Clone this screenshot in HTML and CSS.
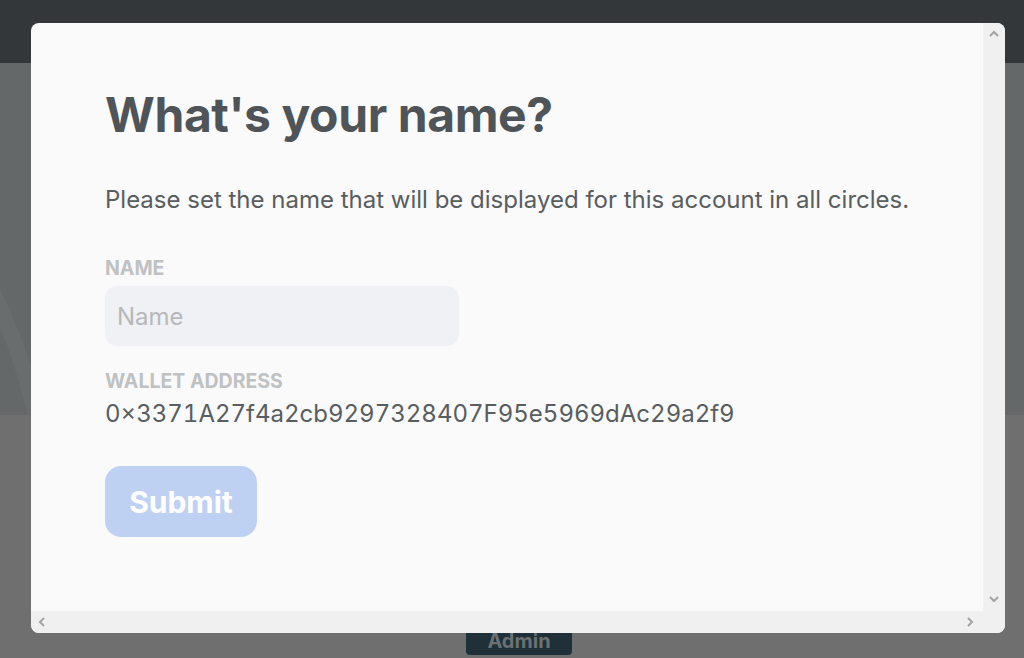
FILE: index.html
```html
<!DOCTYPE html>
<html>
<head>
<meta charset="utf-8">
<link rel="stylesheet" href="styles.css">
</head>
<body>
<div class="page">
  <header class="topbar"></header>
  <section class="hero"><div class="arc"></div></section>
  <section class="lower">
    <div class="admin">Admin</div>
  </section>
</div>

<div class="modal">
  <div class="modal-body">
    <div class="content">
      <h1 class="title">What's your name?</h1>
      <p class="lead">Please set the name that will be displayed for this account in all circles.</p>
      <label class="label" for="name">NAME</label>
      <input class="input" id="name" type="text" placeholder="Name">
      <div class="label label-wallet">WALLET ADDRESS</div>
      <div class="address">0×3371A27f4a2cb9297328407F95e5969dAc29a2f9</div>
      <button class="submit" type="button">Submit</button>
    </div>
    <div class="vscroll">
      <svg class="arrow" width="10" height="8" viewBox="0 0 10 8"><path d="M1 6 L5 2 L9 6" fill="none" stroke="#a3a3a3" stroke-width="2"/></svg>
      <svg class="arrow" width="10" height="8" viewBox="0 0 10 8"><path d="M1 2 L5 6 L9 2" fill="none" stroke="#a3a3a3" stroke-width="2"/></svg>
    </div>
  </div>
  <div class="hscroll">
    <div class="htrack">
      <svg class="arrow" width="8" height="10" viewBox="0 0 8 10"><path d="M6 1 L2 5 L6 9" fill="none" stroke="#a3a3a3" stroke-width="2"/></svg>
      <svg class="arrow" width="8" height="10" viewBox="0 0 8 10"><path d="M2 1 L6 5 L2 9" fill="none" stroke="#a3a3a3" stroke-width="2"/></svg>
    </div>
    <div class="corner"></div>
  </div>
</div>
</body>
</html>
```

FILE: styles.css
```css
* { box-sizing: border-box; }
html, body { margin: 0; padding: 0; }
body {
  width: 1024px;
  height: 658px;
  overflow: hidden;
  font-family: Inter, "Noto Sans", sans-serif;
  position: relative;
}
.page {
  display: flex;
  flex-direction: column;
  height: 658px;
}
.topbar {
  height: 63px;
  background: #33373a;
}
.hero {
  height: 352px;
  background: #656868;
  position: relative;
  overflow: hidden;
}
.arc {
  position: absolute;
  left: -520px;
  top: 50px;
  width: 580px;
  height: 900px;
  border-radius: 50%;
  border: 16px solid rgba(255,255,255,0.035);
}
.lower {
  flex: 1;
  background: #6f6f6f;
  display: flex;
  align-items: flex-end;
  justify-content: center;
  padding: 0 0 3px 14px;
}
.admin {
  width: 106px;
  height: 25px;
  background: #1f3038;
  border-radius: 4px;
  color: #6b7173;
  font-weight: 700;
  font-size: 20px;
  line-height: 22px;
  text-align: center;
}

.modal {
  position: absolute;
  left: 31px;
  top: 23px;
  width: 974px;
  height: 610px;
  background: #fafafa;
  border-radius: 8px;
  overflow: hidden;
  display: flex;
  flex-direction: column;
}
.modal-body {
  flex: 1;
  display: flex;
}
.content {
  flex: 1;
  padding: 62px 0 0 74px;
  display: flex;
  flex-direction: column;
  align-items: flex-start;
}
.title {
  margin: 0;
  font-size: 48px;
  line-height: 59px;
  font-weight: 700;
  color: #4e5457;
  letter-spacing: -0.4px;
}
.lead {
  margin: 41px 0 0;
  font-size: 24px;
  line-height: 30px;
  color: #585d60;
}
.label {
  margin-top: 42px;
  font-size: 19.5px;
  line-height: 22px;
  font-weight: 700;
  color: #bfc1c3;
}
.input {
  margin-top: 7px;
  width: 354px;
  height: 60px;
  border: none;
  outline: none;
  border-radius: 12px;
  background: #f0f1f4;
  font-family: inherit;
  font-size: 24px;
  padding: 0 12px;
  color: #585d60;
}
.input::placeholder { color: #b6b8bb; }
.label-wallet {
  margin-top: 24px;
}
.address {
  margin-top: 7px;
  font-size: 24px;
  line-height: 30px;
  color: #585d60;
  font-variant-numeric: tabular-nums;
}
.submit {
  margin-top: 37px;
  width: 152px;
  height: 71px;
  border: none;
  border-radius: 16px;
  background: #bfd1f2;
  color: #ffffff;
  font-family: inherit;
  font-weight: 700;
  font-size: 30px;
  padding: 0;
}
.vscroll {
  width: 22px;
  background: #f0f0f0;
  display: flex;
  flex-direction: column;
  justify-content: space-between;
  align-items: center;
  padding: 7px 0 8px;
}
.hscroll {
  height: 22px;
  display: flex;
}
.htrack {
  flex: 1;
  background: #f0f0f0;
  display: flex;
  justify-content: space-between;
  align-items: center;
  padding: 0 9px 0 7px;
}
.corner {
  width: 22px;
  background: #f0f0f0;
}
.arrow { display: block; }
```
